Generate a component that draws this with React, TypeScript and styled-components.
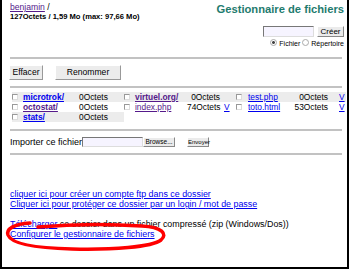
import React from 'react';
import styled, { createGlobalStyle } from 'styled-components';

const GlobalStyle = createGlobalStyle`
  html, body {
    margin: 0;
    padding: 0;
    background: #fff;
  }
  body {
    font-family: "Liberation Sans", Arial, sans-serif;
  }
`;

const Frame = styled.div`
  position: relative;
  box-sizing: border-box;
  width: 349px;
  height: 269px;
  border-left: 2px solid #000;
  border-right: 2px solid #000;
  border-bottom: 2px solid #000;
  background: #fff;
  padding: 0 3px 0 8px;
  overflow: hidden;
`;

const Header = styled.div`
  display: flex;
  justify-content: space-between;
  align-items: flex-start;
  height: 57px;
`;

const PathBlock = styled.div`
  padding-top: 2px;
  font-size: 8.6px;
  line-height: 10px;
  color: #000;
`;

const Stats = styled.div`
  font-weight: bold;
  font-size: 7.6px;
  line-height: 10px;
`;

const Link = styled.a<{ $visited?: boolean; $bold?: boolean }>`
  color: ${(p) => (p.$visited ? '#551a8b' : '#0000ee')};
  font-weight: ${(p) => (p.$bold ? 'bold' : 'normal')};
  text-decoration: underline;
  cursor: pointer;
`;

const RightBlock = styled.div`
  display: flex;
  flex-direction: column;
  align-items: flex-end;
`;

const Title = styled.div`
  color: #1e7b6e;
  font-weight: bold;
  font-size: 11.2px;
  line-height: 14px;
  padding-top: 2px;
  margin-bottom: 10px;
`;

const CreateRow = styled.div`
  display: flex;
  align-items: center;
  gap: 3px;
`;

const TextInput = styled.div<{ $w: number; $h?: number }>`
  box-sizing: border-box;
  width: ${(p) => p.$w}px;
  height: ${(p) => p.$h ?? 11}px;
  background: #f6f4ff;
  border: 1px solid #777;
  border-right-color: #ddd;
  border-bottom-color: #ddd;
`;

const SmallButton = styled.div<{ $w: number; $h?: number; $fs?: number }>`
  box-sizing: border-box;
  width: ${(p) => p.$w}px;
  height: ${(p) => p.$h ?? 11}px;
  background: #ebebeb;
  border: 1px solid #fff;
  border-right-color: #888;
  border-bottom-color: #888;
  font-size: ${(p) => p.$fs ?? 6}px;
  line-height: ${(p) => (p.$h ?? 11) - 2}px;
  text-align: center;
  color: #000;
  white-space: nowrap;
`;

const RadioRow = styled.div`
  display: flex;
  align-items: center;
  font-size: 7px;
  line-height: 9px;
  margin-top: 2px;
  gap: 2px;
`;

const Radio = styled.span<{ $on?: boolean }>`
  display: inline-block;
  width: 5px;
  height: 5px;
  border-radius: 50%;
  border: 1px solid #aaa;
  background: ${(p) => (p.$on ? 'radial-gradient(#444 35%, #fff 45%)' : '#fff')};
  margin-right: 2px;
`;

const Rule = styled.div`
  height: 2px;
  background: #c2c2c2;
  margin-right: 2px;
`;

const ActionRow = styled.div`
  display: flex;
  gap: 12px;
  padding: 6px 0 6px 0;
  margin-left: -1px;
`;

const Button = styled.div<{ $w: number }>`
  box-sizing: border-box;
  width: ${(p) => p.$w}px;
  height: 15px;
  background: #ececec;
  border: 1px solid #fff;
  border-right-color: #999;
  border-bottom-color: #999;
  font-size: 8.6px;
  line-height: 13px;
  text-align: center;
  color: #000;
`;

const FileGrid = styled.div`
  display: grid;
  grid-template-columns: 112px 112px 110px;
  padding: 4px 0 7px 2px;
`;

const Cell = styled.div<{ $gray?: boolean; $cols: string }>`
  display: grid;
  grid-template-columns: ${(p) => p.$cols};
  align-items: center;
  height: 10px;
  font-size: 8.4px;
  line-height: 10px;
  background: ${(p) => (p.$gray ? '#ececec' : 'transparent')};
  white-space: nowrap;
`;

const Check = styled.span`
  display: inline-block;
  box-sizing: border-box;
  width: 6px;
  height: 6px;
  border: 1px solid #999;
  border-right-color: #ddd;
  border-bottom-color: #ddd;
  background: #fff;
`;

const Size = styled.span<{ $right?: boolean }>`
  text-align: ${(p) => (p.$right ? 'right' : 'left')};
  color: #000;
`;

const View = styled.span<{ $pad: number }>`
  padding-left: ${(p) => p.$pad}px;
`;

const ImportRow = styled.div`
  display: flex;
  align-items: center;
  padding: 6px 0 6px 0;
  font-size: 9px;
  line-height: 10px;
`;

const Spacer = styled.span`
  width: 12px;
`;

const Links = styled.div`
  padding-top: 34px;
  font-size: 8.9px;
  line-height: 10px;
`;

const Gap = styled.div`
  height: 10px;
`;

const Scribble = styled.svg`
  position: absolute;
  left: 0;
  top: 215px;
  pointer-events: none;
`;

type Item = { name: string; bold?: boolean; visited?: boolean; size: string; view?: boolean };

const columns = [
  { cols: '11px 56px 37px 8px', right: false, pad: 0 },
  { cols: '11px 52px 33px 16px', right: true, pad: 4 },
  { cols: '12px 44px 36px 16px', right: true, pad: 11 },
];

const rows: (Item | null)[][] = [
  [
    { name: 'microtrok/', bold: true, size: '0Octets' },
    { name: 'virtuel.org/', bold: true, visited: true, size: '0Octets' },
    { name: 'test.php', size: '0Octets', view: true },
  ],
  [
    { name: 'octostat/', bold: true, visited: true, size: '0Octets' },
    { name: 'index.php', visited: true, size: '74Octets', view: true },
    { name: 'toto.html', size: '53Octets', view: true },
  ],
  [{ name: 'stats/', bold: true, size: '0Octets' }, null, null],
];

const App: React.FC = () => {
  return (
    <>
      <GlobalStyle />
      <Frame>
        <Header>
          <PathBlock>
            <Link $visited>benjamin</Link> /
            <Stats>127Octets / 1,59 Mo (max: 97,66 Mo)</Stats>
          </PathBlock>
          <RightBlock>
            <Title>Gestionnaire de fichiers</Title>
            <CreateRow>
              <TextInput $w={51} />
              <SmallButton $w={27} $fs={8}>Créer</SmallButton>
            </CreateRow>
            <RadioRow>
              <span><Radio $on />Fichier</span>
              <span><Radio />Répertoire</span>
            </RadioRow>
          </RightBlock>
        </Header>
        <Rule />
        <ActionRow>
          <Button $w={34}>Effacer</Button>
          <Button $w={66}>Renommer</Button>
        </ActionRow>
        <Rule />
        <FileGrid>
          {rows.map((row, r) =>
            row.map((it, c) =>
              it ? (
                <Cell key={`${r}-${c}`} $gray={r % 2 === 0} $cols={columns[c].cols}>
                  <Check />
                  <span>
                    <Link $bold={it.bold} $visited={it.visited}>{it.name}</Link>
                  </span>
                  <Size $right={columns[c].right}>{it.size}</Size>
                  <View $pad={columns[c].pad}>{it.view ? <Link>V</Link> : null}</View>
                </Cell>
              ) : (
                <div key={`${r}-${c}`} />
              )
            )
          )}
        </FileGrid>
        <Rule />
        <ImportRow>
          Importer ce fichier
          <TextInput $w={61} $h={10} />
          <SmallButton $w={32} $h={10} $fs={6.5}>Browse...</SmallButton>
          <Spacer />
          <SmallButton $w={22} $h={10}>Envoyer</SmallButton>
        </ImportRow>
        <Rule />
        <Links>
          <div><Link>cliquer ici pour créer un compte ftp dans ce dossier</Link></div>
          <div><Link>Cliquer ici pour protéger ce dossier par un login / mot de passe</Link></div>
          <Gap />
          <div><Link>Télécharger</Link> ce dossier dans un fichier compressé (zip (Windows/Dos))</div>
          <div><Link>Configurer le gestionnaire de fichiers</Link></div>
        </Links>
        <Scribble width="200" height="45" viewBox="0 0 200 45">
          <path
            d="M28 8 C 12 9, 4 14, 6 20 C 9 28, 30 33, 70 34 C 110 35, 150 32, 159 25 C 166 19, 160 12, 140 11 C 110 9, 70 9, 36 12"
            fill="none"
            stroke="#ff0000"
            strokeWidth="3.5"
            strokeLinecap="round"
          />
        </Scribble>
      </Frame>
    </>
  );
};

export default App;
